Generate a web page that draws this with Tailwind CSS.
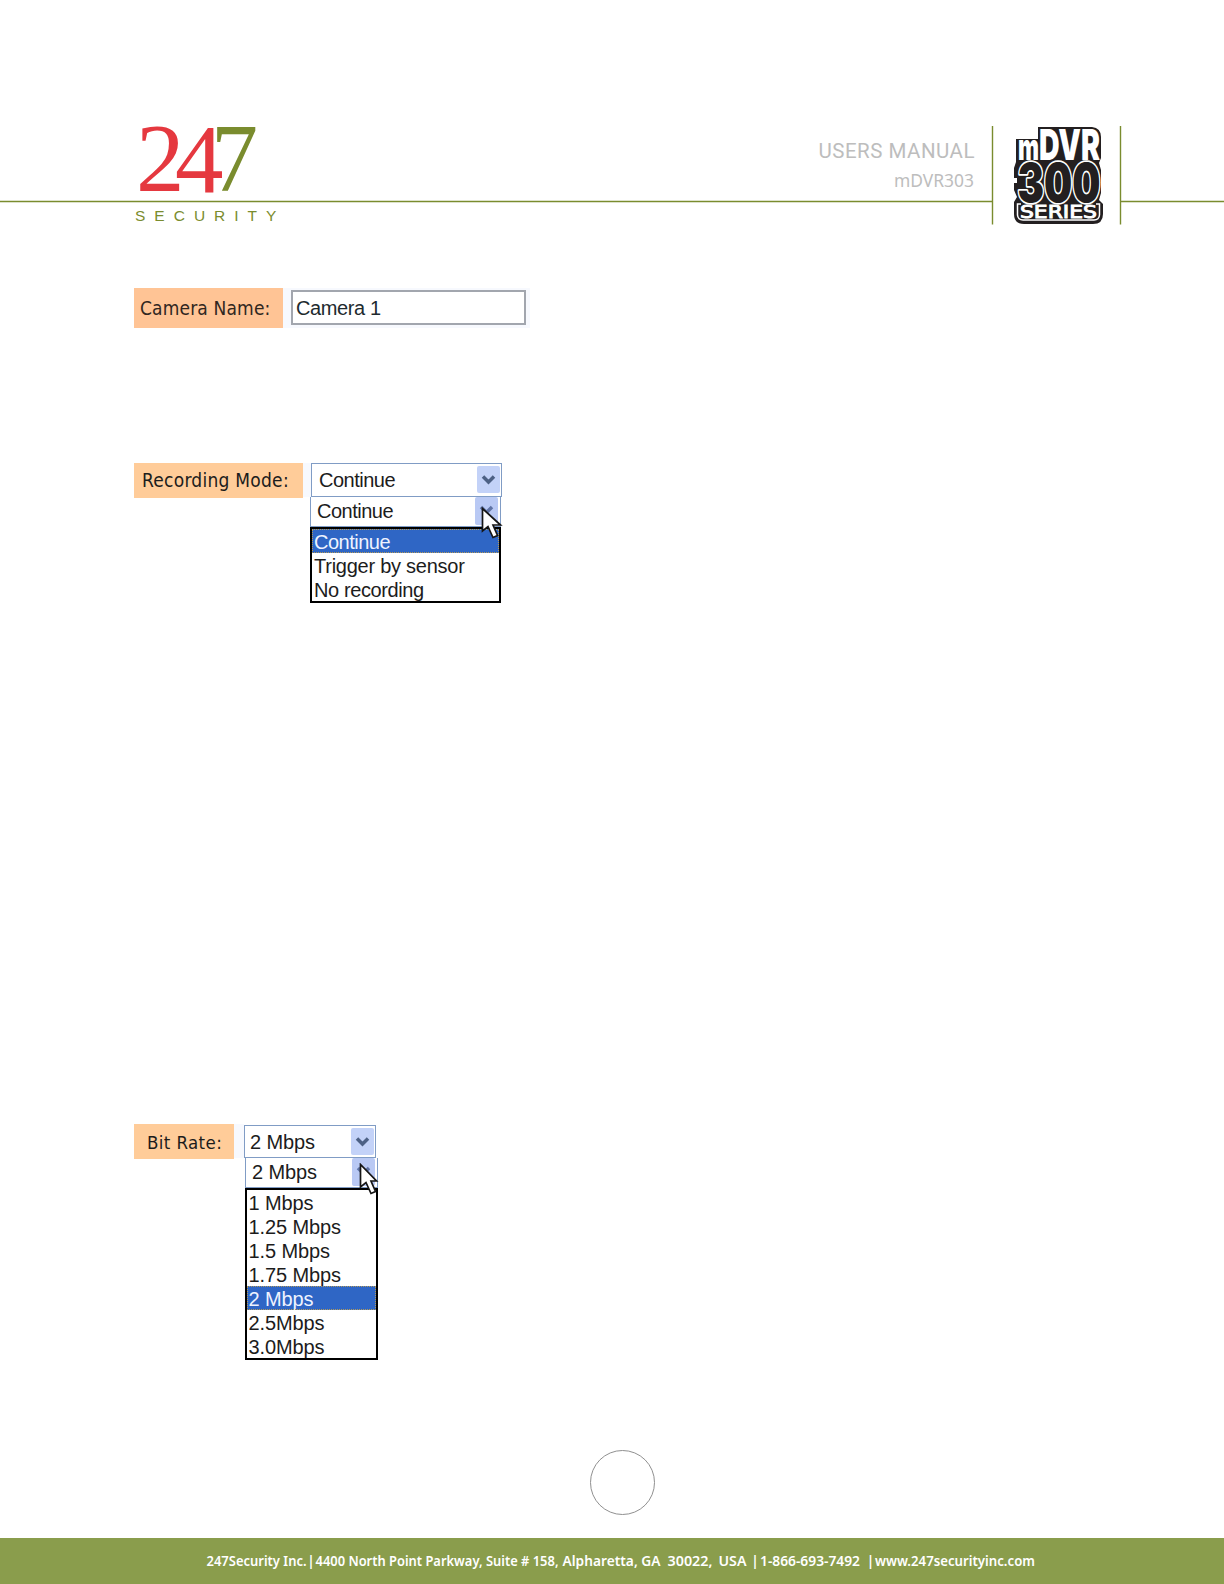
<!DOCTYPE html>
<html lang="en">
<head>
  <meta charset="UTF-8">
  <title>mDVR303 Users Manual - 247 Security</title>
  <script src="https://cdn.jsdelivr.net/npm/@tailwindcss/browser@4"></script>
</head>
<body class="bg-white w-[1224px] h-[1584px] flex flex-col overflow-hidden font-['Liberation_Sans',sans-serif] text-[20px] text-[#1c1c1c]">
  <!-- Header -->
  <header class="h-[240px] shrink-0">
    <svg width="1224" height="240" viewBox="0 0 1224 240">
      <path d="M0 201.500H992.500M1120.500 201.500H1224M992.500 126V224.500M1120.500 126V224.500" stroke="#7a8c2e" stroke-width="1.400" />
      <g font-family="Liberation Serif, serif" font-size="97">
        <text x="136" y="191" fill="#e5383f">2</text>
        <text x="175" y="191.500" fill="#e5383f">4</text>
        <text x="211" y="190.500" textLength="47" lengthAdjust="spacingAndGlyphs" fill="#7a8c2e">7</text>
      </g>
      <text x="135" y="221" font-family="Liberation Sans, sans-serif" font-size="15.500" textLength="150" fill="#7a8c2e" letter-spacing="8.600">SECURITY</text>
      <g fill="#bdbdbd">
        <text x="818.500" y="158" font-family="Roboto, sans-serif" font-size="20.500" textLength="156">USERS MANUAL</text>
        <text x="894" y="187" font-family="Noto Sans, sans-serif" font-size="18" textLength="80" lengthAdjust="spacingAndGlyphs">mDVR303</text>
      </g>
      <!-- Series badge -->
      <path d="M1038 127H1092Q1101 128 1101 137V158L1099 163L1101 170V193L1099 200L1103 204V214Q1103 224 1093 224H1024Q1014 224 1014 214V202L1017 197L1014 190V183H1017V178H1014V168L1016 162V139H1038Z" fill="#231f20" />
      <path d="M1021 204H1017.500V215Q1018 220 1023 220H1094Q1099 220 1099.500 215V204H1096" fill="none" stroke="#fff" stroke-width="1.500" />
      <g font-family="Inter, sans-serif" font-weight="900">
        <text x="1018" y="160" font-size="36" textLength="21" lengthAdjust="spacingAndGlyphs" fill="#fff">m</text>
        <text x="1039" y="160" font-size="43" textLength="61" lengthAdjust="spacingAndGlyphs" fill="#fff">DVR</text>
        <text x="1017.500" y="201.500" font-size="53" textLength="83" lengthAdjust="spacingAndGlyphs" fill="#231f20" stroke="#fff" stroke-width="3.500" stroke-linejoin="round" paint-order="stroke">300</text>
      </g>
      <text x="1020" y="218" font-family="DejaVu Sans, sans-serif" font-size="17.500" textLength="77" lengthAdjust="spacingAndGlyphs" fill="#fff" stroke="#fff" stroke-width="0.900">SERIES</text>
    </svg>
  </header>

  <main class="flex flex-col items-start pl-[134px] pt-12 grow">
    <!-- Camera name -->
    <div class="flex h-10 bg-[#f7f9fe] w-[396px]">
      <label class="w-[149px] h-10 pl-[6px] leading-[40px] bg-[#ffc495] font-['DejaVu_Sans_Condensed','DejaVu_Sans',sans-serif] [font-stretch:condensed] text-[19px] tracking-[0.15px] text-[#30271f] whitespace-nowrap">Camera Name:</label>
      <div class="mt-[2px] ml-[8px] w-[235px] h-[35px] pl-[3px] leading-[33px] border-2 border-[#a2a6ae] bg-white tracking-[-0.4px] text-[#1e2a2e]">Camera 1</div>
    </div>

    <!-- Recording mode -->
    <div class="mt-[135px] flex items-start">
      <label class="w-[169px] h-[35px] pl-[8px] leading-[35px] bg-[#ffcc99] font-['DejaVu_Sans_Condensed','DejaVu_Sans',sans-serif] [font-stretch:condensed] text-[19px] tracking-[0.25px] whitespace-nowrap">Recording Mode:</label>
      <div class="w-2 h-[34px] bg-[#f7f9fe]"></div>
      <div class="relative w-[192px]">
        <div class="flex justify-between w-[191px] h-[34px] pl-[7px] pr-[1px] pt-[2px] border-[1.5px] border-[#809cc5]">
          <span class="leading-[29px] tracking-[-0.5px]">Continue</span>
          <svg width="23" height="27" viewBox="0 0 23 27"><rect width="23" height="27" rx="2" fill="#c3d2f8" /><path d="M6 10.500l5.500 5.500L17 10.500" fill="none" stroke="#4d6185" stroke-width="3.500" /></svg>
        </div>
        <div class="-ml-px flex justify-between w-[191px] h-[30px] pl-[6px] pr-[2px] border-x border-b border-[#809cc5]">
          <span class="leading-[29px] tracking-[-0.5px]">Continue</span>
          <svg width="23" height="28" viewBox="0 0 23 28"><rect width="23" height="28" rx="2" fill="#b9c9f4" /><path d="M6 10l5.500 5.500L17 10" fill="none" stroke="#5f73a5" stroke-width="3.500" /></svg>
        </div>
        <ul class="-ml-px w-[191px] h-[76px] border-2 border-black leading-[26px] whitespace-nowrap">
          <li class="h-6 pl-[2px] bg-[#2f66c5] text-[#eef3ff] tracking-[-0.5px] outline-1 outline-dotted -outline-offset-1 outline-[#b39a5a]">Continue</li>
          <li class="h-6 pl-[2px] tracking-[-0.25px]">Trigger by sensor</li>
          <li class="h-6 pl-[2px] tracking-[-0.4px]">No recording</li>
        </ul>
        <svg class="absolute left-[170px] top-[44px]" width="22" height="33" viewBox="0 0 22 33"><path d="M1.500 1.500V24L7 19.500L12 30.500L16.500 28.500L12 18H19.500Z" fill="#fff" stroke="#151515" stroke-width="1.700" /></svg>
      </div>
    </div>

    <!-- Bit rate -->
    <div class="mt-[521px] flex items-start">
      <label class="w-[100px] h-[35px] pl-[13px] pt-px leading-[35px] bg-[#ffcc99] font-['DejaVu_Sans_Condensed','DejaVu_Sans',sans-serif] [font-stretch:condensed] text-[18.500px] tracking-[0.4px] whitespace-nowrap">Bit Rate:</label>
      <div class="w-[10px] h-[34px] bg-[#f7f9fe]"></div>
      <div class="relative w-[134px] mt-px">
        <div class="flex justify-between w-[132px] h-[33px] pl-[5px] pr-px pt-[2px] border-[1.5px] border-[#809cc5]">
          <span class="leading-[29px] tracking-[-0.1px]">2 Mbps</span>
          <svg width="23" height="27" viewBox="0 0 23 27"><rect width="23" height="27" rx="2" fill="#c3d2f8" /><path d="M6 10.500l5.500 5.500L17 10.500" fill="none" stroke="#4d6185" stroke-width="3.500" /></svg>
        </div>
        <div class="ml-px flex justify-between w-[133px] h-[30px] pl-[6px] pr-[2px] border-x border-b border-[#809cc5]">
          <span class="leading-[29px] tracking-[-0.1px]">2 Mbps</span>
          <svg width="23" height="28" viewBox="0 0 23 28"><rect width="23" height="28" rx="2" fill="#b9c9f4" /><path d="M6 10l5.500 5.500L17 10" fill="none" stroke="#5f73a5" stroke-width="3.500" /></svg>
        </div>
        <ul class="ml-px w-[133px] h-[172px] border-2 border-black leading-[26px] tracking-[-0.1px] whitespace-nowrap">
          <li class="h-6 pl-[1.5px]">1 Mbps</li>
          <li class="h-6 pl-[1.5px]">1.25 Mbps</li>
          <li class="h-6 pl-[1.5px]">1.5 Mbps</li>
          <li class="h-6 pl-[1.5px]">1.75 Mbps</li>
          <li class="h-6 pl-[1.5px] bg-[#2f66c5] text-[#eef3ff] outline-1 outline-dotted -outline-offset-1 outline-[#b39a5a]">2 Mbps</li>
          <li class="h-6 pl-[1.5px]">2.5Mbps</li>
          <li class="h-6 pl-[1.5px]">3.0Mbps</li>
        </ul>
        <svg class="absolute left-[115px] top-[38px]" width="22" height="33" viewBox="0 0 22 33"><path d="M1.500 1.500V24L7 19.500L12 30.500L16.500 28.500L12 18H17.500Z" fill="#fff" stroke="#151515" stroke-width="1.700" /></svg>
      </div>
    </div>

    <!-- Page number circle -->
    <div class="mt-[90px] ml-[456px] size-[65px] rounded-full border border-[#909090]"></div>
  </main>

  <footer class="h-[46px] shrink-0 bg-[#8a9d4c] font-['Noto_Sans',sans-serif] font-semibold text-[14.500px]">
    <svg width="1224" height="46" viewBox="0 0 1224 46" fill="#fff">
      <text x="206.500" y="28" textLength="100" lengthAdjust="spacingAndGlyphs">247Security Inc.</text>
      <text x="307" y="28">|</text>
      <text x="315.500" y="28" textLength="243" lengthAdjust="spacingAndGlyphs">4400 North Point Parkway, Suite # 158,</text>
      <text x="562.500" y="28" textLength="98" lengthAdjust="spacingAndGlyphs">Alpharetta, GA</text>
      <text x="667.500" y="28" textLength="45" lengthAdjust="spacingAndGlyphs">30022,</text>
      <text x="718.500" y="28" textLength="28" lengthAdjust="spacingAndGlyphs">USA</text>
      <text x="751" y="28">|</text>
      <text x="760" y="28" textLength="100" lengthAdjust="spacingAndGlyphs">1-866-693-7492</text>
      <text x="866.500" y="28">|</text>
      <text x="875" y="28" textLength="160" lengthAdjust="spacingAndGlyphs">www.247securityinc.com</text>
    </svg>
  </footer>
</body>
</html>
